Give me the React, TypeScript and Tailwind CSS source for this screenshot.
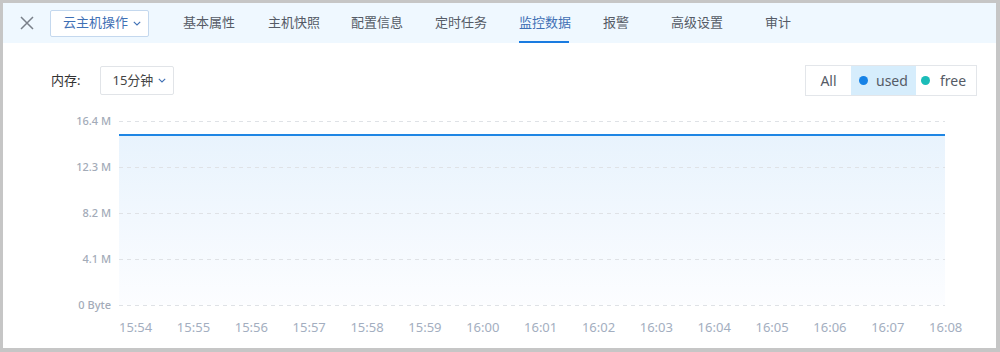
import React from "react";

const tabs: { label: string; w: number; active?: boolean }[] = [
  { label: "基本属性", w: 85 },
  { label: "主机快照", w: 83 },
  { label: "配置信息", w: 84 },
  { label: "定时任务", w: 84 },
  { label: "监控数据", w: 84, active: true },
  { label: "报警", w: 68 },
  { label: "高级设置", w: 94 },
  { label: "审计", w: 40 },
];

const yLabels = ["16.4 M", "12.3 M", "8.2 M", "4.1 M", "0 Byte"];
const xLabels = [
  "15:54", "15:55", "15:56", "15:57", "15:58", "15:59", "16:00", "16:01",
  "16:02", "16:03", "16:04", "16:05", "16:06", "16:07", "16:08",
];

function Chevron({ color }: { color: string }) {
  return (
    <svg width="8" height="5" viewBox="0 0 8 5" fill="none">
      <path d="M0.8 0.8 L4 4 L7.2 0.8" stroke={color} strokeWidth="1.1" />
    </svg>
  );
}

export default function App() {
  return (
    <div
      className="w-[1000px] h-[352px] bg-[#c6c6c6] pt-[3px] pl-[3px] pr-[4px] pb-[4px] overflow-hidden"
      style={{ fontFamily: '"Noto Sans", "Noto Sans CJK SC", sans-serif' }}
    >
      <div className="w-full h-full bg-white flex flex-col">
        {/* header */}
        <div className="h-[40px] bg-[#eff8ff] flex items-center shrink-0">
          <div className="ml-[17px] w-[14px] h-[14px] flex items-center justify-center">
            <svg width="14" height="14" viewBox="0 0 14 14">
              <path d="M1 1 L13 13 M13 1 L1 13" stroke="#7a808a" strokeWidth="1.5" />
            </svg>
          </div>
          <div className="ml-[16px] w-[99px] h-[27px] border border-[#c4d8ee] bg-white rounded-[2px] flex items-center pl-[12px] gap-[5px] text-[13px] text-[#3f70b5]">
            <span>云主机操作</span>
            <Chevron color="#3f70b5" />
          </div>
          <div className="ml-[34px] flex h-full">
            {tabs.map((t) => (
              <div
                key={t.label}
                className="h-full relative flex items-center"
                style={{ width: t.w }}
              >
                <span
                  className={
                    "text-[13px] " + (t.active ? "text-[#3f70b5]" : "text-[#555b66]")
                  }
                >
                  {t.label}
                </span>
                {t.active && (
                  <div className="absolute left-0 bottom-0 w-[50px] h-[2px] bg-[#1a7be0]" />
                )}
              </div>
            ))}
          </div>
        </div>

        {/* toolbar */}
        <div className="flex items-center justify-between pl-[48px] pr-[19px] mt-[22px] h-[31px]">
          <div className="flex items-center">
            <span className="text-[13px] text-[#333]">内存:</span>
            <div className="ml-[20px] w-[74px] h-[29px] border border-[#e1e4e8] rounded-[2px] flex items-center pl-[11px] gap-[5px] text-[13px] text-[#444]">
              <span>15分钟</span>
              <Chevron color="#3f70b5" />
            </div>
          </div>
          <div className="flex h-[31px] border border-[#e3e6ea] text-[14px] text-[#555b66]">
            <div className="w-[45px] flex items-center justify-center">All</div>
            <div className="w-[65px] bg-[#d6edfc] flex items-center pl-[8px] gap-[8px]">
              <span className="w-[9px] h-[9px] rounded-full bg-[#1782e6]" />
              <span>used</span>
            </div>
            <div className="w-[60px] flex items-center pl-[5px] gap-[10px]">
              <span className="w-[9px] h-[9px] rounded-full bg-[#1bbcb8]" />
              <span>free</span>
            </div>
          </div>
        </div>

        {/* chart */}
        <div className="flex mt-[17px]">
          <div className="w-[108px] flex flex-col gap-[30px] items-end">
            {yLabels.map((l) => (
              <div key={l} className="h-[16px] leading-[16px] text-[11px] text-[#a3abb8] font-medium">
                {l}
              </div>
            ))}
          </div>
          <svg className="ml-[8px]" width="826" height="200" viewBox="0 0 826 200">
            <defs>
              <linearGradient id="ar" x1="0" y1="0" x2="0" y2="1">
                <stop offset="0" stopColor="#e8f3fd" />
                <stop offset="1" stopColor="#fcfdff" />
              </linearGradient>
            </defs>
            <rect x="0" y="22" width="826" height="170" fill="url(#ar)" />
            {[8, 54, 100, 146, 192].map((y) => (
              <line
                key={y}
                x1="0"
                x2="826"
                y1={y + 0.5}
                y2={y + 0.5}
                stroke="#dfe2e6"
                strokeDasharray="4 4"
              />
            ))}
            <line x1="0" x2="826" y1="22" y2="22" stroke="#1f86e4" strokeWidth="2" />
          </svg>
        </div>

        <div className="flex pl-[116px] mt-[5px]">
          {xLabels.map((l) => (
            <div key={l} className="w-[57.86px] shrink-0 text-[13px] text-[#a3aec0] leading-[18px]">
              {l}
            </div>
          ))}
        </div>
      </div>
    </div>
  );
}
